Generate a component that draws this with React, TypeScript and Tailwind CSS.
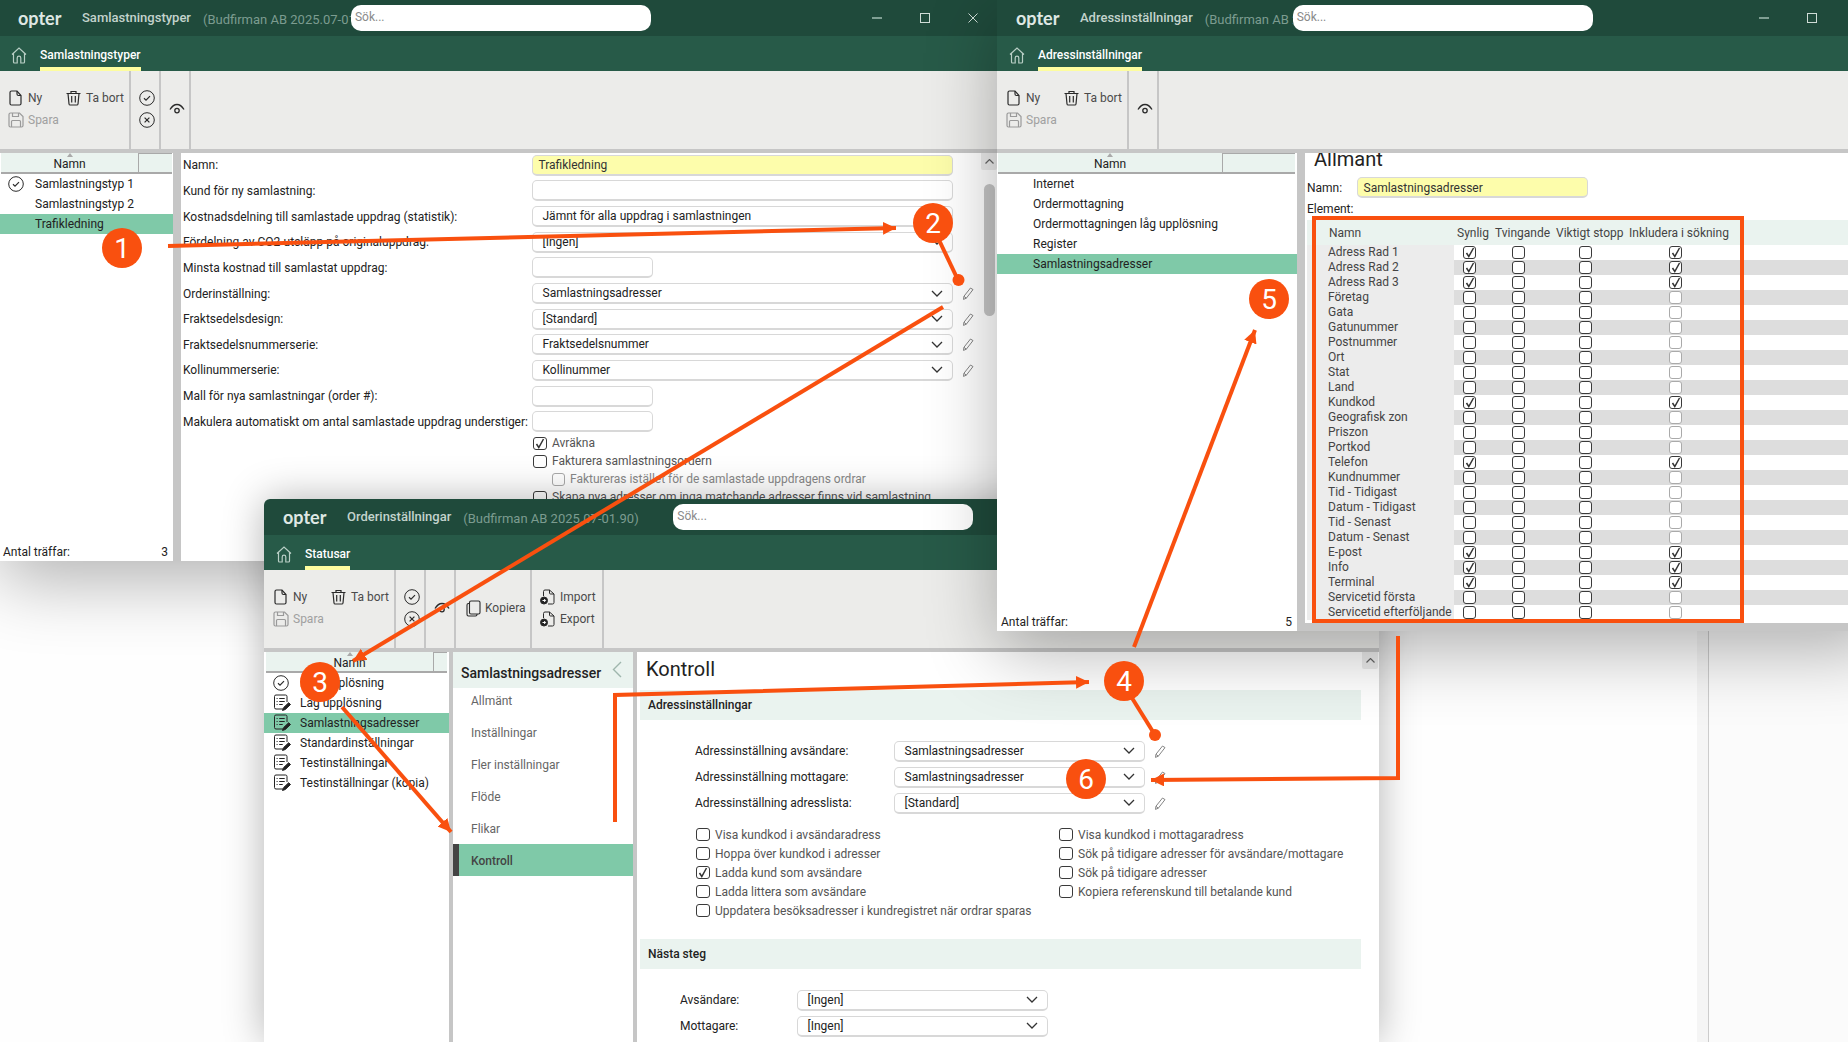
import type { ReactNode } from 'react';

const ink = '#2a2a2a';

function FileIcon() {
  return (
    <svg width="13" height="16" viewBox="0 0 13 16" fill="none" stroke={ink} strokeWidth="1.2">
      <path d="M1 2.5A1.5 1.5 0 0 1 2.5 1H8l4 4.5v8A1.5 1.5 0 0 1 10.5 15h-8A1.5 1.5 0 0 1 1 13.5Z" />
      <path d="M8 1v3a1.5 1.5 0 0 0 1.5 1.5H12" />
    </svg>
  );
}

function TrashIcon() {
  return (
    <svg width="15" height="16" viewBox="0 0 15 16" fill="none" stroke={ink} strokeWidth="1.2">
      <path d="M0.5 3.5h14M5 3.5V1.5h5v2M2 3.5l1 10.5a1.2 1.2 0 0 0 1.2 1h6.6a1.2 1.2 0 0 0 1.2-1l1-10.5M5.7 6v6.5M9.3 6v6.5" />
    </svg>
  );
}

function SaveIcon() {
  return (
    <svg width="16" height="16" viewBox="0 0 16 16" fill="none" stroke="#9a9a9a" strokeWidth="1.2">
      <path d="M1 2.5A1.5 1.5 0 0 1 2.5 1h9L15 4.5v9a1.5 1.5 0 0 1-1.5 1.5h-11A1.5 1.5 0 0 1 1 13.5Z" />
      <path d="M4.5 1v3.5h6V1M3.5 15V9.5a1 1 0 0 1 1-1h7a1 1 0 0 1 1 1V15" />
    </svg>
  );
}

function CircleCheck() {
  return (
    <svg width="16" height="16" viewBox="0 0 16 16" fill="none" stroke={ink} strokeWidth="1">
      <circle cx="8" cy="8" r="7.3" />
      <path d="M5 8.3l2 1.8 4-4" strokeWidth="1.2" />
    </svg>
  );
}

function CircleCross() {
  return (
    <svg width="16" height="16" viewBox="0 0 16 16" fill="none" stroke={ink} strokeWidth="1">
      <circle cx="8" cy="8" r="7.3" />
      <path d="M5.6 5.6l4.8 4.8M10.4 5.6l-4.8 4.8" strokeWidth="1.2" />
    </svg>
  );
}

function EyeIcon() {
  return (
    <svg width="16" height="12" viewBox="0 0 16 12" fill="none" stroke={ink} strokeWidth="1.3">
      <path d="M1 6.5C3 3.2 5.3 1.5 8 1.5s5 1.7 7 5" />
      <circle cx="8" cy="7.6" r="2.2" />
    </svg>
  );
}

function HomeIcon() {
  return (
    <svg width="16" height="17" viewBox="0 0 16 17" fill="none" stroke="#b9cfc6" strokeWidth="1.2">
      <path d="M1 7.5L8 1l7 6.5M2.5 6.5V15a1 1 0 0 0 1 1h2.7v-5a1.8 1.8 0 0 1 3.6 0v5h2.7a1 1 0 0 0 1-1V6.5" />
    </svg>
  );
}

function PencilIcon() {
  return (
    <svg width="12" height="13" viewBox="0 0 12 13" fill="none" stroke="#777" strokeWidth="0.9">
      <path d="M8.5 1L11 2.6 4.3 11.2 1.5 12.4 1.9 9.3Z" />
      <path d="M2 9.3l2.3 1.9" />
    </svg>
  );
}

function Chevron() {
  return (
    <svg width="12" height="7" viewBox="0 0 12 7" fill="none" stroke="#333" strokeWidth="1.3">
      <path d="M1 1l5 5 5-5" />
    </svg>
  );
}

function ChevronUp() {
  return (
    <svg width="9" height="5" viewBox="0 0 9 5" fill="none" stroke="#666" strokeWidth="1.2">
      <path d="M0.5 4.5l4-4 4 4" />
    </svg>
  );
}

function NoteIcon() {
  return (
    <svg width="18" height="18" viewBox="0 0 18 18" fill="none" stroke="#222" strokeWidth="1">
      <path d="M10 15H3a1.5 1.5 0 0 1-1.5-1.5v-11A1.5 1.5 0 0 1 3 1h9.5A1.5 1.5 0 0 1 14 2.5V8" />
      <path d="M3.6 4.5h1M3.6 7.5h1M3.6 10.5h1M6.2 4.5h5.5M6.2 7.5h5.5M6.2 10.5h3.5" strokeWidth="1.1" />
      <path d="M9.5 16.5l1-2.8 5.2-5 1.8 1.8-5.2 5Z" fill="#222" />
    </svg>
  );
}

function DocArrowIcon() {
  return (
    <svg width="15" height="16" viewBox="0 0 15 16" fill="none" stroke={ink} strokeWidth="1">
      <path d="M3.5 7V2.5A1.5 1.5 0 0 1 5 1h4.5L14 5v8.5a1.5 1.5 0 0 1-1.5 1.5H8" />
      <path d="M9.5 1v3a1 1 0 0 0 1 1H14" />
      <circle cx="4" cy="11.5" r="3.5" fill="#222" />
      <path d="M2.5 11.5h3M4.2 10l1.4 1.5L4.2 13" stroke="#fff" />
    </svg>
  );
}

function CopyIcon() {
  return (
    <svg width="15" height="17" viewBox="0 0 15 17" fill="none" stroke={ink} strokeWidth="1.1">
      <rect x="3.5" y="1" width="10.5" height="13" rx="1.5" />
      <path d="M3.5 3.5H2.5A1.5 1.5 0 0 0 1 5v9.5A1.5 1.5 0 0 0 2.5 16h7A1.5 1.5 0 0 0 11 14.5V14" />
    </svg>
  );
}

function Checkbox({ checked = false, light = false, wide = false }: { checked?: boolean; light?: boolean; wide?: boolean }) {
  const size = wide ? 'w-[14px] h-[13px]' : 'w-[13px] h-[13px]';
  return (
    <span
      className={
        size +
        (checked || !light
          ? ' relative block shrink-0 rounded-[3px] border border-[#3a3a3a] bg-white'
          : ' relative block shrink-0 rounded-[3px] border border-[#aaaaaa] bg-white')
      }
    >
      {checked && (
        <svg className="absolute left-[1px] top-[0px]" width="10" height="11" viewBox="0 0 10 11" fill="none" stroke="#333" strokeWidth="1.5">
          <path d="M1.5 6l2.3 3.5L8.5 1" />
        </svg>
      )}
    </span>
  );
}

function TitleBar({ title, version, versionWidth, controls = true }: { title: string; version: string; versionWidth: string; controls?: boolean }) {
  return (
    <div className="flex items-center h-[36px] shrink-0 bg-[#1f4a3b]">
      <span className="w-[83px] pl-[19px] text-[18px] font-bold text-[#dfe8e4] leading-none [font-family:Lato,sans-serif]">opter</span>
      <span className="mr-[12px] text-[13px] font-medium text-[#c3d3cc] whitespace-nowrap">{title}</span>
      <span className={versionWidth + ' mt-[3px] text-[13px] text-[#7c9c90] whitespace-nowrap overflow-hidden'}>{version}</span>
      <div className="w-[300px] h-[26px] shrink-0 rounded-[10px] bg-white pl-[4px] pb-[3px] flex items-center text-[12px] text-[#8a8a8a]">Sök...</div>
      {controls && (
        <div className="ml-auto flex items-center">
          <div className="w-[48px] flex justify-center"><span className="block w-[10px] h-[2px] bg-[#7f9f93]" /></div>
          <div className="w-[48px] flex justify-center"><span className="block w-[10px] h-[10px] border border-[#cfdcd6]" /></div>
          <div className="w-[48px] flex justify-center">
            <svg width="10" height="10" viewBox="0 0 10 10" stroke="#cfdcd6" strokeWidth="1"><path d="M0.5 0.5l9 9M9.5 0.5l-9 9" /></svg>
          </div>
        </div>
      )}
    </div>
  );
}

function TabBar({ label }: { label: string }) {
  return (
    <div className="flex items-stretch h-[35px] shrink-0 bg-[#275a48] pl-[12px]">
      <div className="w-[29px] pt-[4px] flex items-center"><HomeIcon /></div>
      <div className="flex items-center pt-[7px] border-b-[4px] border-[#fdfd9f] text-[12px] font-medium text-white">{label}</div>
    </div>
  );
}

function ToolRow({ icon, label, dim = false }: { icon: ReactNode; label: string; dim?: boolean }) {
  return (
    <div className={dim ? 'flex items-center h-[22px] text-[#a0a0a0]' : 'flex items-center h-[22px] text-[#4a4a4a]'}>
      {icon}
      <span>{label}</span>
    </div>
  );
}

function MainTools() {
  return (
    <div className="w-[132px] h-full border-r-2 border-[#c6c6c6] pl-[10px] pb-[2px] flex flex-col justify-center">
      <div className="flex items-center h-[22px] text-[#4a4a4a]">
        <span className="w-[19px]"><FileIcon /></span>
        <span className="w-[38px]">Ny</span>
        <span className="w-[20px]"><TrashIcon /></span>
        <span>Ta bort</span>
      </div>
      <div className="flex items-center h-[22px] text-[#a0a0a0]">
        <span className="w-[20px] -ml-[1px]"><SaveIcon /></span>
        <span>Spara</span>
      </div>
    </div>
  );
}

function CheckTools() {
  return (
    <div className="w-[30px] h-full border-r-2 border-[#c6c6c6] pl-[4px] pb-[2px] flex flex-col justify-center items-center gap-[6px]">
      <CircleCheck />
      <CircleCross />
    </div>
  );
}

function EyeTools() {
  return (
    <div className="w-[30px] h-full border-r-2 border-[#c6c6c6] pl-[4px] pb-[2px] flex justify-center items-center">
      <EyeIcon />
    </div>
  );
}

function Toolbar({ children }: { children: ReactNode }) {
  return (
    <>
      <div className="flex h-[78px] shrink-0 bg-[#ececea] text-[12px]">{children}</div>
      <div className="h-[4px] shrink-0 bg-[#c6c6c6]" />
    </>
  );
}

type ListRow = { label: string; icon?: 'check' | 'note'; active?: boolean };

function ListPane({ width, colWidth, endWidth, marginLeft, rows, count }: { width: string; colWidth: string; endWidth: string; marginLeft: string; rows: ListRow[]; count?: number }) {
  return (
    <div className={width + ' flex flex-col shrink-0 bg-white'}>
      <div className={marginLeft + ' relative flex h-[21px] shrink-0 border-b-2 border-[#a9a9a9] bg-[#eaf3ef]'}>
        <div className={colWidth + ' relative flex items-center justify-center pt-[3px] text-[12px] text-[#222]'}>
          <span className="absolute top-[0px] left-1/2 -ml-[3px] w-0 h-0 border-x-[3px] border-x-transparent border-b-[4px] border-b-[#aaaaaa]" />
          Namn
        </div>
        <div className={endWidth + ' border-l border-t border-[#a9a9a9]'} />
      </div>
      {rows.map((row) => (
        <div key={row.label} className={row.active ? 'flex items-center h-[20px] shrink-0 bg-[#7fc9a8] text-[12px] text-[#222]' : 'flex items-center h-[20px] shrink-0 text-[12px] text-[#222]'}>
          <span className="w-[36px] pl-[9px] flex items-center">
            {row.icon === 'check' && <CircleCheck />}
            {row.icon === 'note' && <NoteIcon />}
          </span>
          <span className="whitespace-nowrap">{row.label}</span>
        </div>
      ))}
      {count !== undefined && (
        <div className="mt-auto flex justify-between pl-[4px] pr-[5px] text-[12px] text-[#222]">
          <span>Antal träffar:</span>
          <span>{count}</span>
        </div>
      )}
    </div>
  );
}

function Select({ value, width }: { value: string; width: string }) {
  return (
    <div className={width + ' flex items-center justify-between h-[21px] shrink-0 pl-[9.5px] pr-[9px] rounded-[5px] border border-[#d8d8d8] border-b-2 bg-white text-[12px] text-[#222]'}>
      <span>{value}</span>
      <Chevron />
    </div>
  );
}

function TextBox({ value = '', width, yellow = false }: { value?: string; width: string; yellow?: boolean }) {
  return (
    <div className={width + (yellow ? ' bg-[#fdfdab]' : ' bg-white') + ' flex items-center h-[21px] shrink-0 pl-[5.5px] pt-[1px] rounded-[5px] border border-[#d8d8d8] border-b-2 text-[12px] text-[#333]'}>
      {value}
    </div>
  );
}

function FormRow({ label, children }: { label: string; children: ReactNode }) {
  return (
    <div className="flex items-center h-[25.65px] text-[12px] text-[#222]">
      <span className="w-[351px] pl-[2px] whitespace-nowrap">{label}</span>
      {children}
    </div>
  );
}

function CheckLine({ label, checked = false }: { label: string; checked?: boolean }) {
  return (
    <div className="flex items-center h-[19px] gap-[5px] text-[12px] text-[#555] whitespace-nowrap">
      <Checkbox checked={checked} wide />
      <span>{label}</span>
    </div>
  );
}

function Scroller({ position = 'right-[1px]', children }: { position?: string; children?: ReactNode }) {
  return (
    <>
      <div className={position + ' absolute top-0 w-[16px] h-[17px] rounded-b-[2px] bg-[#ececec] flex items-center justify-center'}><ChevronUp /></div>
      {children}
    </>
  );
}

function SamlastningsWindow() {
  const selectRows = [
    ['Orderinställning:', 'Samlastningsadresser'],
    ['Fraktsedelsdesign:', '[Standard]'],
    ['Fraktsedelsnummerserie:', 'Fraktsedelsnummer'],
    ['Kollinummerserie:', 'Kollinummer'],
  ];
  return (
    <div className="absolute left-[-1px] top-0 z-10 w-[998px] h-[561px] flex flex-col rounded-bl-[5px] bg-white shadow-[0_20px_70px_rgba(0,0,0,0.3)]">
      <TitleBar title="Samlastningstyper" version="(Budfirman AB 2025.07-01.90)" versionWidth="w-[148px]" />
      <TabBar label="Samlastningstyper" />
      <Toolbar>
        <MainTools />
        <CheckTools />
        <EyeTools />
      </Toolbar>
      <div className="flex flex-1 min-h-0">
        <ListPane
          width="w-[174px]"
          marginLeft="ml-[2px] mr-[1px]"
          colWidth="w-[137px]"
          endWidth="flex-1"
          rows={[
            { label: 'Samlastningstyp 1', icon: 'check' },
            { label: 'Samlastningstyp 2' },
            { label: 'Trafikledning', active: true },
          ]}
          count={3}
        />
        <div className="w-[8px] shrink-0 bg-[#c6c6c6]" />
        <div className="relative flex-1 overflow-hidden bg-white">
          <div className="-mt-[0.5px]">
            <FormRow label="Namn:"><TextBox value="Trafikledning" width="w-[421px]" yellow /></FormRow>
            <FormRow label="Kund för ny samlastning:"><TextBox width="w-[421px]" /></FormRow>
            <FormRow label="Kostnadsdelning till samlastade uppdrag (statistik):"><Select value="Jämnt för alla uppdrag i samlastningen" width="w-[421px]" /></FormRow>
            <FormRow label="Fördelning av CO2-utsläpp på originaluppdrag:"><Select value="[Ingen]" width="w-[421px]" /></FormRow>
            <FormRow label="Minsta kostnad till samlastat uppdrag:"><TextBox width="w-[121px]" /></FormRow>
            {selectRows.map(([label, value]) => (
              <FormRow key={label} label={label}>
                <Select value={value} width="w-[421px]" />
                <span className="ml-[9px]"><PencilIcon /></span>
              </FormRow>
            ))}
            <FormRow label="Mall för nya samlastningar (order #):"><TextBox width="w-[121px]" /></FormRow>
            <FormRow label="Makulera automatiskt om antal samlastade uppdrag understiger:"><TextBox width="w-[121px]" /></FormRow>
          </div>
          <div className="-mt-[1px] ml-[352px] -space-y-[1px]">
            <CheckLine label="Avräkna" checked />
            <CheckLine label="Fakturera samlastningsordern" />
            <div className="flex items-center h-[19px] gap-[5px] pl-[19px] text-[12px] text-[#888] whitespace-nowrap">
              <span className="block w-[13px] h-[13px] rounded-[3px] border border-[#aaaaaa]" />
              Faktureras istället för de samlastade uppdragens ordrar
            </div>
            <CheckLine label="Skapa nya adresser om inga matchande adresser finns vid samlastning" />
          </div>
          <Scroller position="right-0">
            <div className="absolute top-[31px] right-[2px] w-[11px] h-[132px] rounded-full bg-[#c6c6c6]" />
          </Scroller>
        </div>
      </div>
    </div>
  );
}

const adressRows: [string, boolean][] = [
  ['Adress Rad 1', true],
  ['Adress Rad 2', true],
  ['Adress Rad 3', true],
  ['Företag', false],
  ['Gata', false],
  ['Gatunummer', false],
  ['Postnummer', false],
  ['Ort', false],
  ['Stat', false],
  ['Land', false],
  ['Kundkod', true],
  ['Geografisk zon', false],
  ['Priszon', false],
  ['Portkod', false],
  ['Telefon', true],
  ['Kundnummer', false],
  ['Tid - Tidigast', false],
  ['Datum - Tidigast', false],
  ['Tid - Senast', false],
  ['Datum - Senast', false],
  ['E-post', true],
  ['Info', true],
  ['Terminal', true],
  ['Servicetid första', false],
  ['Servicetid efterföljande', false],
];

function AdressWindow() {
  return (
    <div className="absolute left-[997px] top-0 z-30 w-[887px] h-[631px] flex flex-col rounded-bl-[5px] bg-white shadow-[0_20px_70px_rgba(0,0,0,0.3)]">
      <TitleBar title="Adressinställningar" version="(Budfirman AB 2025.07-01.90)" versionWidth="w-[88px]" />
      <TabBar label="Adressinställningar" />
      <Toolbar>
        <MainTools />
        <EyeTools />
      </Toolbar>
      <div className="flex flex-1 min-h-0">
        <ListPane
          width="w-[300px]"
          marginLeft="ml-[1px] mr-[2px]"
          colWidth="w-[224px]"
          endWidth="flex-1"
          rows={[
            { label: 'Internet' },
            { label: 'Ordermottagning' },
            { label: 'Ordermottagningen låg upplösning' },
            { label: 'Register' },
            { label: 'Samlastningsadresser', active: true },
          ]}
          count={5}
        />
        <div className="w-[8px] shrink-0 bg-[#c6c6c6]" />
        <div className="flex-1 flex flex-col overflow-hidden bg-white text-[12px] text-[#222]">
          <div className="h-[15px] pl-[9px] text-[20px] leading-[13px] text-[#222]">Allmänt</div>
          <div className="flex items-center h-[25px] mt-[7px] mb-[1px] pl-[2px]">
            <span className="w-[50px]">Namn:</span>
            <TextBox value="Samlastningsadresser" width="w-[231px]" yellow />
          </div>
          <div className="h-[17px] pl-[2px] leading-[17px]">Element:</div>
          <div className="flex items-center h-[25px] mt-[2px] ml-[2px] bg-[#eaf3ef] text-[#444]">
            <span className="w-[150px] pl-[22px]">Namn</span>
            <span className="w-[38px]">Synlig</span>
            <span className="w-[61px]">Tvingande</span>
            <span className="w-[73px]">Viktigt stopp</span>
            <span>Inkludera i sökning</span>
          </div>
          {adressRows.map(([name, on], i) => (
            <div key={name} className={i % 2 === 1 ? 'flex items-center h-[15px] ml-[2px] bg-[#dddddd] text-[#444]' : 'flex items-center h-[15px] ml-[2px] bg-white text-[#444]'}>
              <span className="w-[147px] h-full pl-[21px] pb-[1px] flex items-center bg-[#ececec] whitespace-nowrap">{name}</span>
              <span className="w-[30px] flex justify-center"><Checkbox checked={on} /></span>
              <span className="w-[68px] flex justify-center"><Checkbox /></span>
              <span className="w-[66px] flex justify-center"><Checkbox /></span>
              <span className="w-[114px] flex justify-center"><Checkbox checked={on} light /></span>
            </div>
          ))}
          <div className="mt-auto h-[8px] shrink-0 bg-[#c6c6c6]" />
        </div>
      </div>
    </div>
  );
}

function SideSelect({ label, value, pencil = true }: { label: string; value: string; pencil?: boolean }) {
  return (
    <div className="flex items-center h-[26px] pl-[58px] text-[12px] text-[#222]">
      <span className="w-[199px]">{label}</span>
      <Select value={value} width="w-[251px]" />
      {pencil && <span className="ml-[9px]"><PencilIcon /></span>}
    </div>
  );
}

function OrderWindow() {
  const left = [
    ['Visa kundkod i avsändaradress', false],
    ['Hoppa över kundkod i adresser', false],
    ['Ladda kund som avsändare', true],
    ['Ladda littera som avsändare', false],
    ['Uppdatera besöksadresser i kundregistret när ordrar sparas', false],
  ] as [string, boolean][];
  const right = [
    'Visa kundkod i mottagaradress',
    'Sök på tidigare adresser för avsändare/mottagare',
    'Sök på tidigare adresser',
    'Kopiera referenskund till betalande kund',
  ];
  const steps = ['Allmänt', 'Inställningar', 'Fler inställningar', 'Flöde', 'Flikar'];
  return (
    <div className="absolute left-[264px] top-[499px] z-20 w-[1115px] h-[543px] flex flex-col rounded-t-[6px] overflow-hidden bg-white">
      <TitleBar title="Orderinställningar" version="(Budfirman AB 2025.07-01.90)" versionWidth="w-[210px]" controls={false} />
      <TabBar label="Statusar" />
      <Toolbar>
        <MainTools />
        <CheckTools />
        <EyeTools />
        <div className="w-[76px] h-full border-r-2 border-[#c6c6c6] pl-[10px] pb-[2px] flex items-center gap-[4px] text-[#4a4a4a]">
          <CopyIcon />
          Kopiera
        </div>
        <div className="w-[72px] h-full border-r-2 border-[#c6c6c6] pl-[8px] pb-[2px] flex flex-col justify-center">
          <ToolRow icon={<span className="mr-[5px]"><DocArrowIcon /></span>} label="Import" />
          <ToolRow icon={<span className="mr-[5px]"><DocArrowIcon /></span>} label="Export" />
        </div>
      </Toolbar>
      <div className="flex flex-1 min-h-0">
        <ListPane
          width="w-[185px]"
          marginLeft="ml-[2px] mr-[2px]"
          colWidth="w-[167px]"
          endWidth="flex-1"
          rows={[
            { label: 'Hög upplösning', icon: 'check' },
            { label: 'Låg upplösning', icon: 'note' },
            { label: 'Samlastningsadresser', icon: 'note', active: true },
            { label: 'Standardinställningar', icon: 'note' },
            { label: 'Testinställningar', icon: 'note' },
            { label: 'Testinställningar (kopia)', icon: 'note' },
          ]}
        />
        <div className="w-[4px] shrink-0 bg-[#c6c6c6]" />
        <div className="w-[180px] shrink-0 bg-white">
          <div className="flex items-center justify-between h-[36px] pl-[8px] pr-[11px] pt-[7px] bg-[#eaf3ef] text-[14px] font-medium text-[#222]">
            Samlastningsadresser
            <svg className="-mt-[8px]" width="10" height="17" viewBox="0 0 10 17" fill="none" stroke="#9fb6ad" strokeWidth="1.4"><path d="M9 1L1.5 8.5 9 16" /></svg>
          </div>
          <div className="-mt-[4px]">
            {steps.map((s) => (
              <div key={s} className="flex items-center h-[32px] pl-[18px] pt-[2px] text-[12px] text-[#666]">{s}</div>
            ))}
            <div className="flex items-center h-[32px] pl-[12px] pt-[2px] border-l-[6px] border-[#444444] bg-[#7fc9a8] text-[12px] font-medium text-[#444]">Kontroll</div>
          </div>
        </div>
        <div className="w-[4px] shrink-0 bg-[#c6c6c6]" />
        <div className="relative flex-1 overflow-hidden bg-white">
          <div className="h-[38px] pl-[9px] pt-[5px] text-[20px] leading-[24px] text-[#222]">Kontroll</div>
          <div className="flex items-center h-[30px] ml-[3px] w-[721px] pl-[8px] bg-[#eaf3ef] text-[12px] font-medium text-[#222]">Adressinställningar</div>
          <div className="mt-[18px]">
            <SideSelect label="Adressinställning avsändare:" value="Samlastningsadresser" />
            <SideSelect label="Adressinställning mottagare:" value="Samlastningsadresser" />
            <SideSelect label="Adressinställning adresslista:" value="[Standard]" />
          </div>
          <div className="flex mt-[9px] pl-[59px]">
            <div className="w-[363px]">
              {left.map(([label, on]) => <CheckLine key={label} label={label} checked={on} />)}
            </div>
            <div>
              {right.map((label) => <CheckLine key={label} label={label} />)}
            </div>
          </div>
          <div className="flex items-center h-[30px] mt-[19px] ml-[3px] w-[721px] pl-[8px] bg-[#eaf3ef] text-[12px] font-medium text-[#222]">Nästa steg</div>
          <div className="mt-[18px]">
            {['Avsändare:', 'Mottagare:', 'Kund:'].map((label, i) => (
              <div key={label} className="flex items-center h-[26px] pl-[43px] text-[12px] text-[#222]">
                <span className="w-[117px]">{i < 2 ? label : ''}</span>
                <Select value="[Ingen]" width="w-[251px]" />
              </div>
            ))}
          </div>
          <Scroller />
        </div>
      </div>
    </div>
  );
}

// numbered callouts and arrows drawn on top of the screenshot
function Annotations() {
  const red = '#f9500f';
  const badges: [number, number, string][] = [
    [122, 248, '1'],
    [933, 223, '2'],
    [320, 682, '3'],
    [1124, 681, '4'],
    [1269, 299, '5'],
    [1086, 779, '6'],
  ];
  return (
    <svg className="absolute inset-0 z-40 pointer-events-none" width="1848" height="1042" viewBox="0 0 1848 1042" fill="none">
      <defs>
        <marker id="head" markerUnits="userSpaceOnUse" markerWidth="14" markerHeight="14" refX="13" refY="6.5" orient="auto">
          <path d="M0 0L13 6.5L0 13Z" fill={red} />
        </marker>
      </defs>
      <g stroke={red} strokeWidth="4">
        <path d="M168 246L896 228" markerEnd="url(#head)" />
        <path d="M939 240L958 280" />
        <path d="M943 307L353 661" markerEnd="url(#head)" />
        <path d="M342 707L451 832" markerEnd="url(#head)" />
        <path d="M615 822V695L1089 682" markerEnd="url(#head)" />
        <path d="M1132 698L1155 735" />
        <path d="M1134 647L1255 330" markerEnd="url(#head)" />
        <path d="M1398 636V778L1151 780" markerEnd="url(#head)" />
        <rect x="1314" y="218" width="428" height="403" />
      </g>
      <circle cx="958.5" cy="280" r="6" fill={red} />
      <circle cx="1155" cy="735" r="6" fill={red} />
      {badges.map(([x, y, n]) => (
        <g key={n}>
          <circle cx={x} cy={y} r="20" fill={red} />
          <text x={x} y={y + 10} textAnchor="middle" fontSize="28" fill="#fff" fontFamily="Roboto, sans-serif">{n}</text>
        </g>
      ))}
    </svg>
  );
}

export default function App() {
  return (
    <div className="relative w-[1848px] h-[1042px] overflow-hidden bg-[#fefefe] [font-family:Roboto,sans-serif]">
      {/* window behind everything, only its splitter shows */}
      <div className="absolute left-[1697px] top-0 bottom-0 w-[12px] bg-[#f5f5f5] border-r border-[#cccccc]" />
      <div className="absolute left-[1709px] right-0 top-0 bottom-0 bg-[#fbfbfb]" />
      <SamlastningsWindow />
      <div className="absolute left-[264px] top-[499px] z-20 w-[1115px] h-[543px] rounded-t-[6px] shadow-[0_0_40px_rgba(0,0,0,0.3)]" />
      <OrderWindow />
      <AdressWindow />
      <Annotations />
    </div>
  );
}
